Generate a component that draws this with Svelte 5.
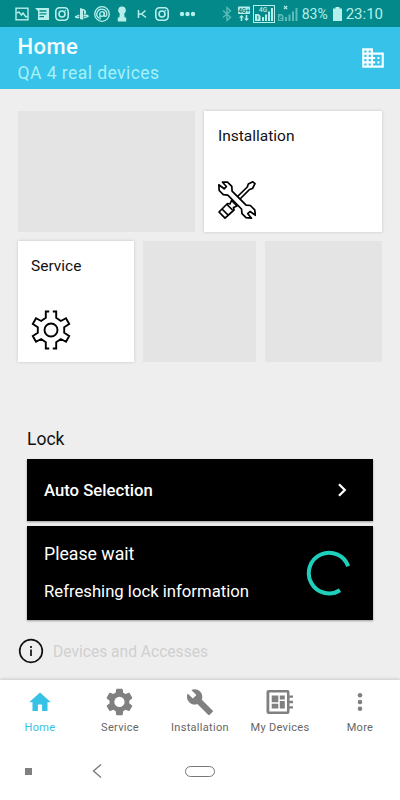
<script lang="ts">
	let active = $state('Home');

	const tabs = [
		{ name: 'Home', icon: 'home' },
		{ name: 'Service', icon: 'gear' },
		{ name: 'Installation', icon: 'wrench' },
		{ name: 'My Devices', icon: 'board' },
		{ name: 'More', icon: 'more' }
	];
</script>

{#snippet camera()}
	<svg width="20" height="16" viewBox="0 0 20 16" fill="none" stroke="currentColor" stroke-width="1.6">
		<rect x="3.8" y="1.8" width="12.4" height="12.4" rx="3.6" />
		<circle cx="10" cy="8" r="3" />
		<circle cx="13.4" cy="4.6" r=".5" fill="currentColor" stroke-width=".6" />
	</svg>
{/snippet}

<div class="phone">
	<div class="status">
		<div class="notifications">
			<svg width="20" height="16" viewBox="0 0 20 16" fill="none" stroke="currentColor" stroke-width="1.4">
				<rect x="4" y="2.2" width="12" height="11.6" />
				<path d="M4.5 7L7 6l2.5 3L11 7l3 4 1.5-1" />
			</svg>
			<svg width="20" height="16" viewBox="0 0 20 16">
				<path fill="currentColor" d="M3 2h14v12H6V5z" />
				<path stroke="#03898a" stroke-width="1.3" d="M7.5 5h7M7.5 7.8h7M7.5 10.6h4.5" />
			</svg>
			{@render camera()}
			<svg width="20" height="16" viewBox="0 0 20 16" fill="currentColor">
				<path d="M8 2l4 1.2c1.6.5 2 1.5 2 3s-.8 2.3-2 1.8V5c0-.8-1-.8-1 0v8.8L8 13z" />
				<path d="M7.3 8.5L4 9.8c-1.6.7-1.6 1.6 0 2.1 1.2.4 2.3.3 3.3 0v-1.3l-1.6.4c-.8 0-.8-.4 0-.6l1.6-.5zM11.5 8.8c2-.4 4-.1 5 .7.8.8.2 1.4-.8 1.8l-4.2 1.5v-1.4l3-1.1c.5-.3 0-.5-.7-.3l-2.3.7z" />
			</svg>
			<svg width="20" height="16" viewBox="0 0 20 16" fill="none" stroke="currentColor" stroke-width="1.3">
				<circle cx="10" cy="8" r="7.3" />
				<path d="M7 12.3A5 5 0 1 1 14.8 8.7C14.5 11 12.2 10.8 12.2 9V6" />
				<circle cx="10" cy="8" r="2.3" />
				<path d="M8 10v3.5" />
			</svg>
			<svg width="20" height="16" viewBox="0 0 20 16" fill="currentColor">
				<circle cx="10" cy="4.2" r="3.8" />
				<path d="M8 6h4l.7 5.5h1.5v4H5.8v-4h1.5z" />
			</svg>
			<svg width="20" height="16" viewBox="0 0 20 16" fill="none" stroke="currentColor" stroke-width="1.5">
				<path d="M6.5 4v8M13.5 4.5L9.500 8h-3M9.500 8l4.500 3.500" />
			</svg>
			{@render camera()}
			<svg class="dots" width="18" height="16" viewBox="0 0 18 16" fill="currentColor">
				<circle cx="3" cy="8" r="2.2" />
				<circle cx="8.500" cy="8" r="2.2" />
				<circle cx="14" cy="8" r="2.2" />
			</svg>
		</div>
		<div class="system">
			<svg class="dim" width="10" height="16" viewBox="0 0 10 16" fill="none" stroke="currentColor" stroke-width="1.3">
				<path d="M1 4.5l7.5 6.8L5 14.5v-13l3.5 3.2L1 11.500" />
			</svg>
			<svg class="data" width="12" height="16" viewBox="0 0 12 16">
				<rect width="12" height="7.5" y=".5" rx="1" fill="currentColor" />
				<text x="6" y="6.8" text-anchor="middle" font-size="6.5" font-weight="700" fill="#03898a">4G+</text>
				<path fill="currentColor" d="M3.500 9L6 11.500H4.300V15H2.700v-3.500H1zM8.500 15L6 12.500h1.700V9h1.600v3.500H11z" />
			</svg>
			<svg class="sim" width="22" height="18" viewBox="0 0 22 18" fill="currentColor">
				<rect x=".5" y=".5" width="21" height="17" fill="none" stroke="currentColor" />
				<text x="10" y="6.5" text-anchor="middle" font-size="6.5" font-weight="500">4G</text>
				<path d="M2 9h3.500l2 1.800V16H2zM9 12h2v4H9zM12 9.500h2V16h-2zM15 6.500h2V16h-2zM18 3h2v13h-2z" />
				<path d="M4.800 11v3.500M4 11.500l.8-.5" stroke="#03898a" fill="none" />
			</svg>
			<svg class="sim2" width="21" height="18" viewBox="0 0 21 18" fill="currentColor">
				<path class="dim" d="M1 9h3.500l2 1.800V16H1zM8 12h2v4H8zM11.500 9.500h2V16h-2zM15 6.500h2V16h-2zM18.500 3h2v13h-2z" />
				<path d="M2.500 11.200h2v1.500h-2v1.800h2.500" stroke="#03898a" fill="none" />
				<path d="M7 1l3.200 3.200M10.200 1L7 4.200" stroke="currentColor" stroke-width="1.1" />
			</svg>
			<span class="percent">83%</span>
			<svg class="battery" width="9" height="14" viewBox="0 0 9 14" fill="currentColor">
				<path d="M2.500 0h4v1.500H9V14H0V1.500h2.500z" />
			</svg>
			<span class="time">23:10</span>
		</div>
	</div>

	<header>
		<div>
			<h1>Home</h1>
			<p>QA 4 real devices</p>
		</div>
		<svg width="26" height="26" viewBox="0 0 24 24" fill="currentColor">
			<path d="M12 7V3H2v18h20V7H12zM6 19H4v-2h2v2zm0-4H4v-2h2v2zm0-4H4V9h2v2zm0-4H4V5h2v2zm4 12H8v-2h2v2zm0-4H8v-2h2v2zm0-4H8V9h2v2zm0-4H8V5h2v2zm10 12h-8v-2h2v-2h-2v-2h2v-2h-2V9h8v10zm-2-8h-2v2h2v-2zm0 4h-2v2h2v-2z" />
		</svg>
	</header>

	<main>
		<div class="tiles top">
			<div class="tile empty"></div>
			<div class="tile">
				<span>Installation</span>
				<svg class="tools" width="38" height="38" viewBox="0 0 38 38" fill="#fff" stroke="#000" stroke-width="1.7" stroke-linejoin="round">
					<path d="M18.500 16.500L29.300 6l1-3 4.500-2.200L37 2.700 34.500 7.500l-3 1L21 19z" />
					<path d="M1 31l8.500-8.500 2.500.5 1.500-3.500 5.500 5.500-3.500 1.500.5 2.500L7 37.200z" />
					<path d="M4 28l6 6M9 23.500l5.500 5.500" />
					<path d="M4.500 1.200h5l4.300 4.200.3 4.800 14 14 4.300.3 4.300 4.300.8 5.500-5.500-3.800-2.200 2.200 3.700 4.500-5.500-.5-4-4-.5-4.700L9.800 14.200l-4.500-.5L1.200 9.500.8 3.800l5.400 4 2.200-2.300z" />
				</svg>
			</div>
		</div>
		<div class="tiles bottom">
			<div class="tile">
				<span>Service</span>
				<svg class="cog" width="40" height="40" viewBox="0 0 40 40" fill="none" stroke="#000" stroke-width="1.9">
					<path d="M18.200 1.500h-3.400v6.200L10.200 11 5 8.200 1.800 14l5 3.300v5.400l-5 3.300L5 31.800 10.200 29l4.600 3.300v6.200h3.400M21.800 1.500h3.400v6.200l4.600 3.300L35 8.200l3.200 5.800-5 3.300v5.400l5 3.300L35 31.800 29.800 29l-4.600 3.300v6.200h-3.400" />
					<circle cx="20" cy="20" r="6.5" />
				</svg>
			</div>
			<div class="tile empty"></div>
			<div class="tile empty"></div>
		</div>

		<section>
			<h2>Lock</h2>
			<div class="card select">
				<strong>Auto Selection</strong>
				<svg width="12" height="16" viewBox="0 0 12 16" fill="none" stroke="#fff" stroke-width="2.3">
					<path d="M3 2.200L8.800 8 3 13.800" />
				</svg>
			</div>
			<div class="card wait">
				<div class="messages">
					<span class="title">Please wait</span>
					<span>Refreshing lock information</span>
				</div>
				<svg width="46" height="46" viewBox="0 0 46 46" fill="none" stroke="#1ed0bb" stroke-width="4">
					<path d="M42.200 16.200A20.300 20.300 0 1 0 34 40.200" />
				</svg>
			</div>
		</section>

		<div class="devices">
			<svg width="26" height="26" viewBox="0 0 26 26" fill="none" stroke="#111" stroke-width="1.7">
				<circle cx="13" cy="13" r="11.3" />
				<path d="M13 11.500v6.500M13 8v2" />
			</svg>
			<span>Devices and Accesses</span>
		</div>
	</main>

	<nav>
		{#each tabs as tab}
			<button class:active={active === tab.name} onclick={() => (active = tab.name)}>
				<svg width="30" height="30" viewBox="0 0 30 30" fill="currentColor">
					{#if tab.icon === 'home'}
						<path d="M15 5.500L4.200 15.200h3.300V24h5.400v-6.500h4.200V24h5.400v-8.800h3.300z" />
					{:else if tab.icon === 'gear'}
						<path transform="translate(-1.400 -.9) scale(1.320)" d="M19.430 12.980c.040-.320.070-.640.070-.980s-.030-.660-.070-.980l2.110-1.650c.190-.150.240-.420.120-.640l-2-3.460c-.120-.220-.390-.300-.610-.220l-2.490 1c-.520-.400-1.080-.730-1.690-.980l-.380-2.650C14.460 2.180 14.250 2 14 2h-4c-.250 0-.460.180-.490.420l-.380 2.650c-.610.250-1.170.590-1.690.980l-2.490-1c-.230-.090-.490 0-.610.220l-2 3.460c-.130.220-.070.490.120.640l2.110 1.650c-.040.320-.070.650-.070.980s.030.660.070.980l-2.110 1.650c-.190.150-.240.420-.120.640l2 3.460c.120.220.390.300.610.220l2.490-1c.520.400 1.080.730 1.690.980l.380 2.650c.030.240.240.420.490.420h4c.250 0 .460-.180.490-.420l.380-2.650c.610-.250 1.170-.590 1.690-.980l2.490 1c.230.090.490 0 .610-.220l2-3.460c.120-.220.070-.490-.120-.640l-2.110-1.650zM12 15.900a3.900 3.900 0 1 1 0-7.800 3.900 3.900 0 0 1 0 7.800z" />
					{:else if tab.icon === 'wrench'}
						<path transform="translate(.8 1) scale(1.180)" d="M22.700 19l-9.100-9.100c.9-2.300.4-5-1.500-6.900-2-2-5-2.400-7.400-1.300L9 6 6 9 1.600 4.700C.4 7.100.9 10.100 2.900 12.100c1.900 1.900 4.600 2.400 6.900 1.500l9.100 9.100c.4.4 1 .4 1.400 0l2.300-2.300c.5-.4.500-1.100.1-1.400z" />
					{:else if tab.icon === 'board'}
						<path fill-rule="evenodd" d="M3.500 3h19a2 2 0 0 1 2 2v3.500H28v2.300h-3.500v3H28v2.400h-3.500v3H28v2.300h-3.500V25a2 2 0 0 1-2 2h-19a2 2 0 0 1-2-2V5a2 2 0 0 1 2-2zM4.300 5.500v19H22v-19z" />
						<path d="M6.700 8.500h6.600v6.800H6.700zM14.800 8.500h5v4h-5zM6.700 16.700h6.600v4.800H6.700zM14.800 14h5v7.500h-5z" />
					{:else}
						<circle cx="15" cy="8.3" r="2.3" />
						<circle cx="15" cy="15" r="2.3" />
						<circle cx="15" cy="21.7" r="2.3" />
					{/if}
				</svg>
				<span>{tab.name}</span>
			</button>
		{/each}
	</nav>

	<div class="system-nav">
		<i class="square"></i>
		<svg width="12" height="16" viewBox="0 0 12 16" fill="none" stroke="#777" stroke-width="1.3">
			<path d="M10 1.500L2.500 8l7.500 6.500" />
		</svg>
		<i class="pill"></i>
	</div>
</div>

<style>
	:global(body) {
		margin: 0;
	}

	.phone {
		display: flex;
		flex-direction: column;
		box-sizing: border-box;
		width: 400px;
		height: 800px;
		overflow: hidden;
		background: #eee;
		color: #111;
		font-family: Roboto, sans-serif;
	}

	svg {
		display: block;
		flex: none;
	}

	.status {
		display: flex;
		justify-content: space-between;
		height: 27px;
		box-sizing: border-box;
		padding: 0 17px 0 11.5px;
		background: #03898a;
		color: #b5efeb;
	}

	.notifications,
	.system {
		display: flex;
		align-items: center;
	}

	.dots {
		margin-left: 7px;
	}

	.dim {
		opacity: 0.5;
	}

	.data {
		margin-left: 6px;
	}

	.sim {
		margin-left: 3px;
	}

	.sim2 {
		margin-left: 2px;
	}

	.percent {
		margin-left: 4px;
		font-size: 14px;
	}

	.battery {
		margin: 0 4px 0 5px;
	}

	.time {
		font-size: 15px;
	}

	header {
		display: flex;
		justify-content: space-between;
		align-items: center;
		box-sizing: border-box;
		height: 62px;
		padding: 0 14px 0 17.5px;
		background: #36c2e9;
		color: #f4fdff;
	}

	h1 {
		margin: 2px 0 0;
		font-size: 22px;
		line-height: 26px;
		font-weight: 500;
		letter-spacing: 0.4px;
	}

	header p {
		margin: 2px 0 0;
		font-size: 17.5px;
		line-height: 23px;
		letter-spacing: 0.45px;
		color: #a8f1f7;
	}

	main {
		flex: 1;
		padding: 22px 18px 0;
	}

	.tiles {
		display: grid;
		gap: 9px;
		margin-bottom: 9px;
	}

	.top {
		grid-template-columns: 177px 178px;
	}

	.bottom {
		grid-template-columns: 116px 113px 117px;
	}

	.tile {
		display: flex;
		flex-direction: column;
		justify-content: space-between;
		box-sizing: border-box;
		height: 121px;
		padding: 15px 14px 14px;
		background: #fff;
		box-shadow: 0 0 3px rgba(0, 0, 0, 0.18);
		font-size: 15.5px;
		line-height: 20px;
	}

	.bottom .tile {
		padding-left: 13px;
	}

	.tools {
		margin-bottom: -1px;
	}

	.cog {
		margin-bottom: -2px;
	}

	.tile.empty {
		background: #e4e4e4;
		box-shadow: none;
	}

	section {
		padding: 57px 9px 0;
	}

	h2 {
		margin: 0 0 9px;
		font-size: 17.5px;
		line-height: 22px;
		font-weight: 400;
	}

	.card {
		display: flex;
		align-items: center;
		justify-content: space-between;
		box-sizing: border-box;
		padding: 0 21.5px 0 17px;
		background: #000;
		color: #fff;
		box-shadow: 0 1px 2px rgba(0, 0, 0, 0.35);
		font-size: 16.7px;
	}

	.select {
		height: 62px;
		margin-bottom: 5px;
		padding-right: 25px;
	}

	.card strong {
		font-weight: 500;
	}

	.wait {
		height: 94px;
	}

	.messages {
		display: flex;
		flex-direction: column;
		gap: 18px;
		line-height: 20px;
	}

	.title {
		font-size: 17.7px;
	}

	.devices {
		display: flex;
		align-items: center;
		gap: 9px;
		margin-top: 18px;
		color: #d0d0d0;
		font-size: 15.6px;
	}

	.devices span {
		margin-top: 2px;
	}

	nav {
		display: grid;
		grid-template-columns: repeat(5, 80px);
		height: 64px;
		background: #fff;
		box-shadow: 0 -1px 3px rgba(0, 0, 0, 0.15);
	}

	button {
		display: flex;
		flex-direction: column;
		align-items: center;
		padding: 7px 0 0;
		border: 0;
		background: none;
		color: #808080;
		font-family: inherit;
		font-size: 11px;
		line-height: 14px;
		letter-spacing: 0.3px;
	}

	button span {
		margin-top: 4px;
		color: #666;
	}

	.active,
	.active span {
		color: #36c2e5;
	}

	.system-nav {
		display: flex;
		align-items: center;
		box-sizing: border-box;
		height: 56px;
		padding: 0 0 2px 25px;
		background: #fff;
	}

	.square {
		width: 7px;
		height: 7px;
		background: #808080;
	}

	.system-nav svg {
		margin: 0 82px 0 59px;
	}

	.pill {
		box-sizing: border-box;
		width: 30px;
		height: 11px;
		border: 1px solid #777;
		border-radius: 6px;
	}
</style>
